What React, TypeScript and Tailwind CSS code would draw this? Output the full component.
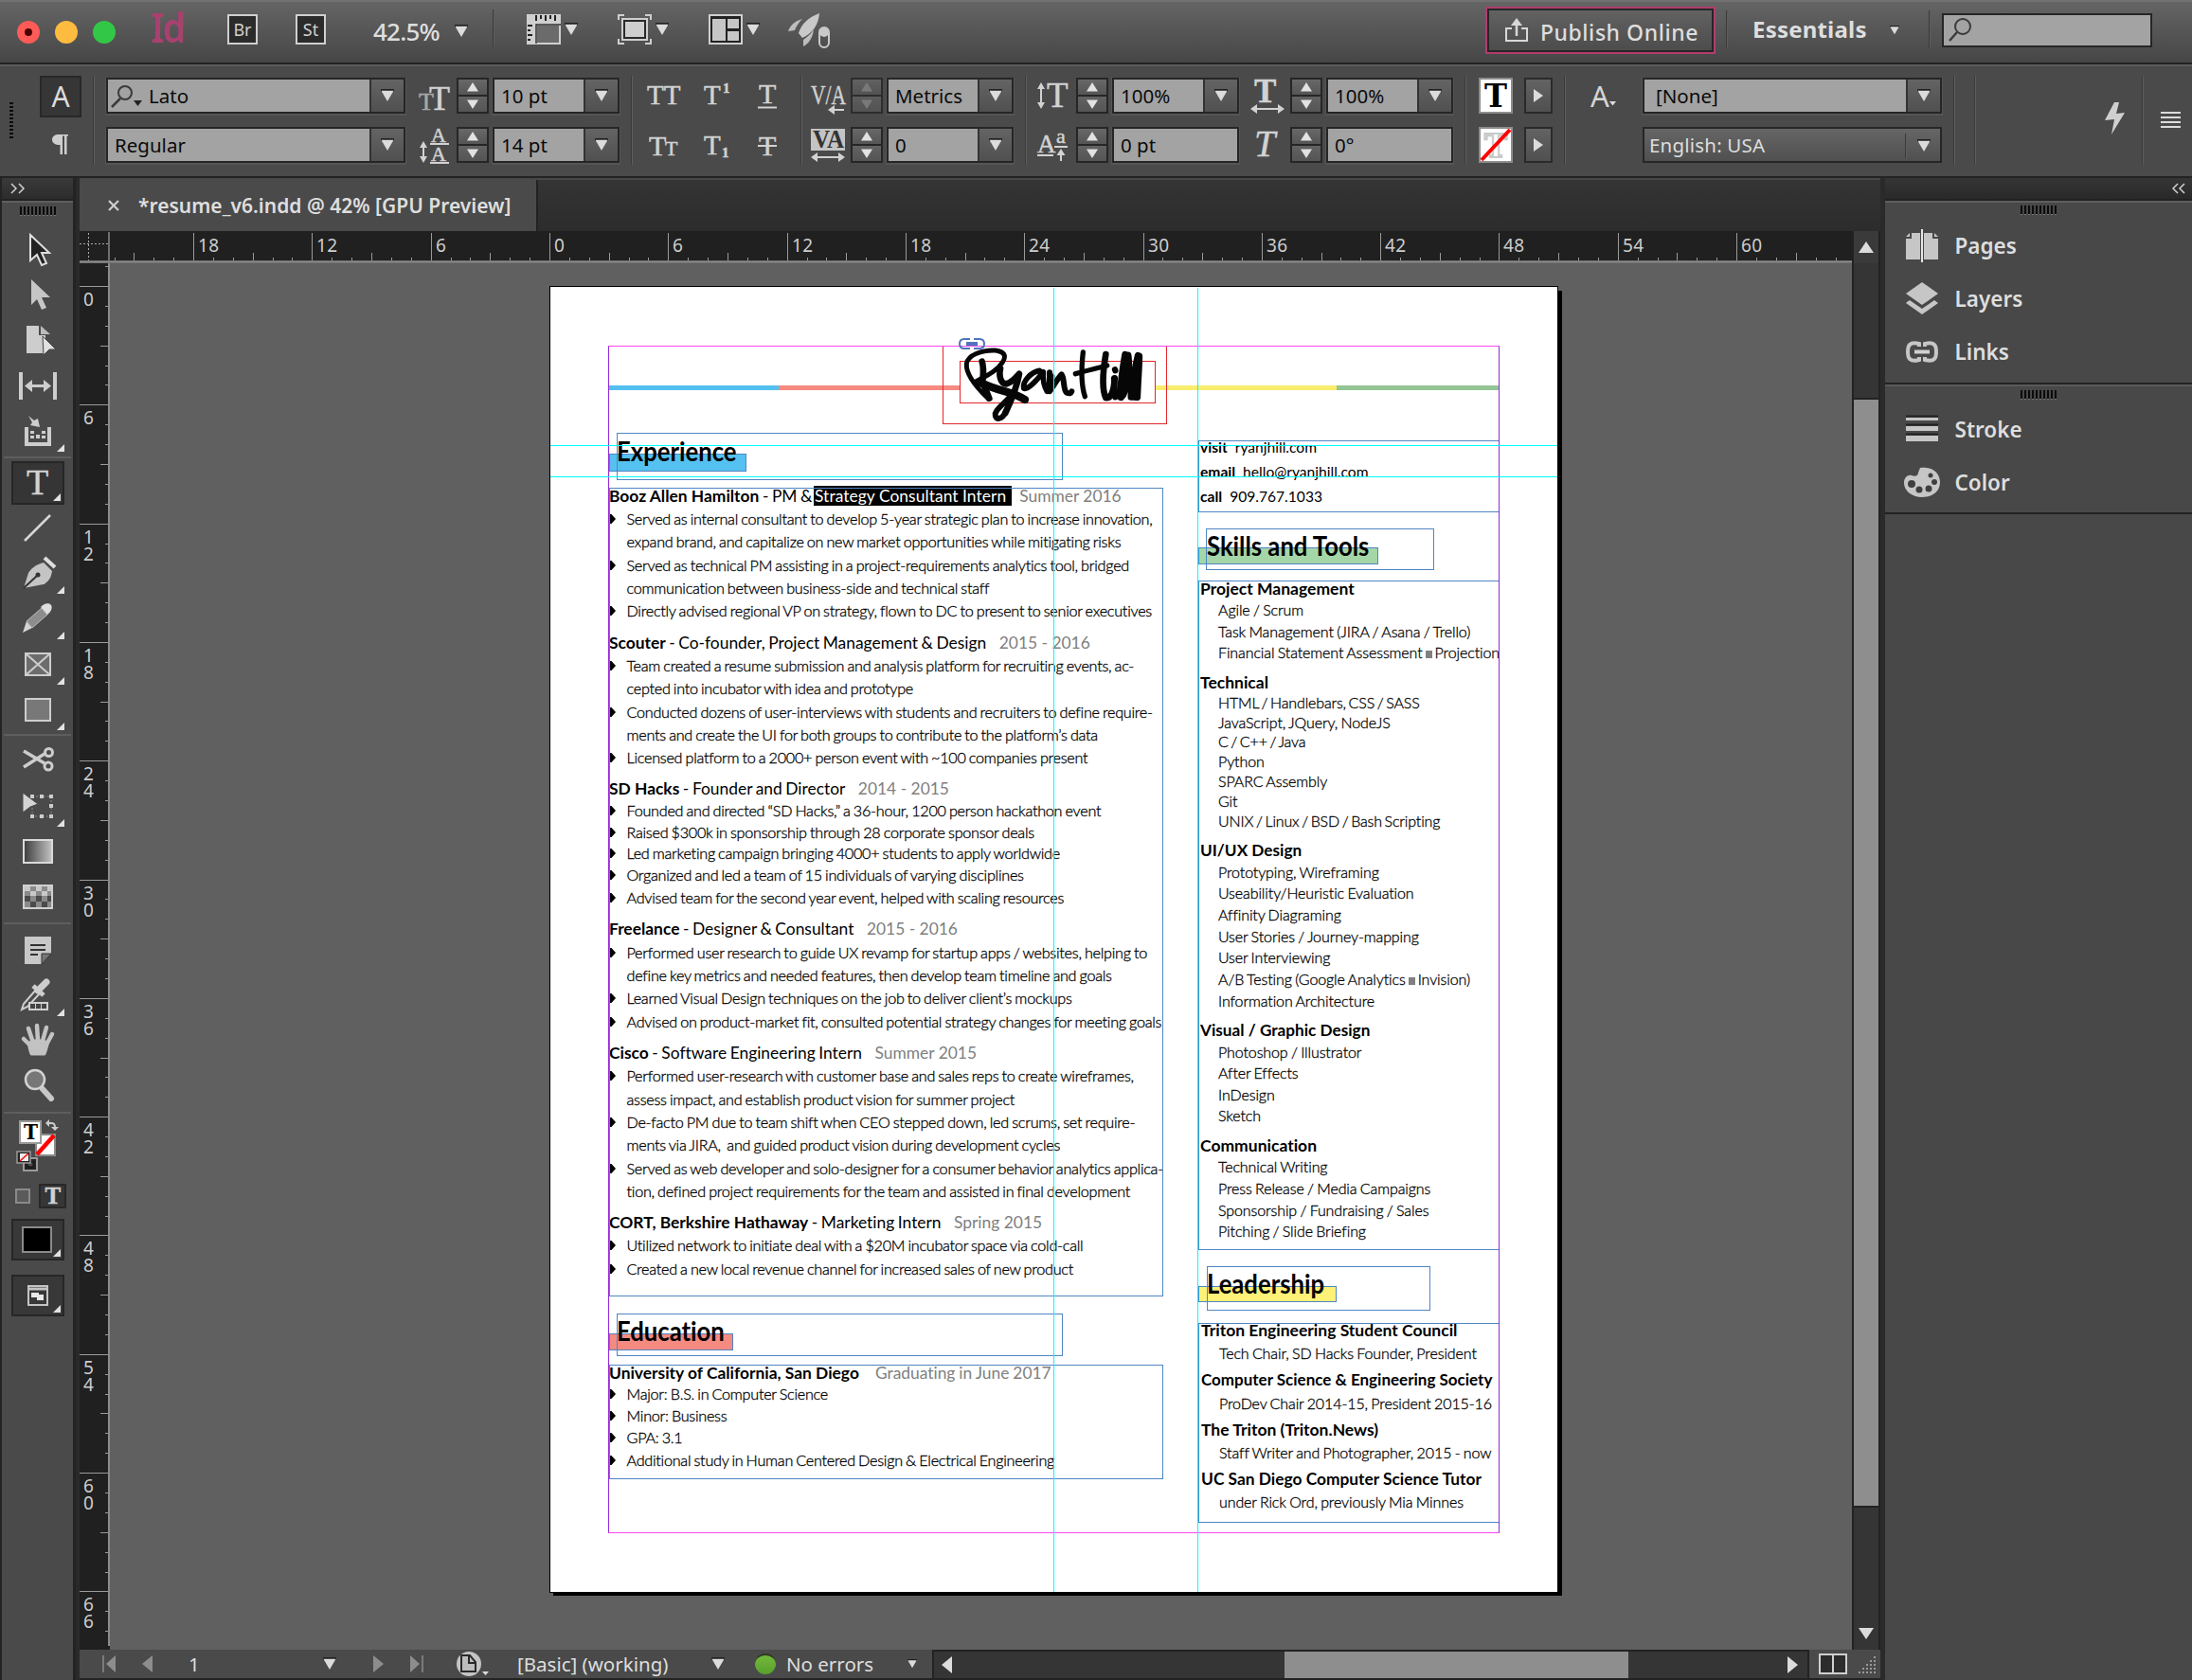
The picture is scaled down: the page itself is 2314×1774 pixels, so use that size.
import React from "react";

type Kids = { children?: React.ReactNode };

/* ---------- small shared pieces ---------- */

const Down = ({ s = 15 }: { s?: number }) => (
  <svg width={s} height={s} viewBox="0 0 15 15" className="shrink-0">
    <path d="M0 0H15V3H0Z" fill="#222" />
    <path d="M0.5 2H14.5L7.5 14Z" fill="#dcdcdc" />
  </svg>
);

const VSep = ({ className = "" }: { className?: string }) => (
  <div className={"w-[2px] shrink-0 border-l border-[#3a3a3a] bg-[#5e5e5e] " + className} />
);

const Grip = () => (
  <div className="flex h-[10px] gap-[2px]">
    {Array.from({ length: 10 }, (_, i) => (
      <div key={i} className="w-[2px] border-b border-[#777] bg-[#0c0c0c]" />
    ))}
  </div>
);

function Stepper({ dim = false }: { dim?: boolean }) {
  const c = dim ? "#858585" : "#e2e2e2";
  return (
    <div className={"flex h-[38px] w-[34px] shrink-0 flex-col gap-[2px] border-2 border-[#262626] bg-[#262626] " + (dim ? "opacity-80" : "")}>
      <div className="flex flex-1 items-center justify-center bg-gradient-to-b from-[#686868] to-[#555]">
        <svg width="12" height="10" viewBox="0 0 12 10"><path d="M6 0L12 9.500H0Z" fill={c} /></svg>
      </div>
      <div className="flex flex-1 items-center justify-center bg-gradient-to-b from-[#626262] to-[#555]">
        <svg width="12" height="10" viewBox="0 0 12 10"><path d="M6 10L12 .5H0Z" fill={c} /></svg>
      </div>
    </div>
  );
}

function Field({ text, drop = true, className = "", children }: { text: string; drop?: boolean; className?: string } & Kids) {
  return (
    <div className={"flex h-[38px] shrink-0 border-2 border-[#262626] shadow-[0_1px_0_1px_#555] " + className}>
      <div className="flex flex-1 items-center bg-[#a3a3a3] pt-px pl-[7px] text-[20.5px] leading-none text-[#0a0a0a]">
        {children}
        <span className="whitespace-nowrap">{text}</span>
      </div>
      {drop && (
        <div className="flex w-[36px] items-center justify-center border-l-2 border-[#333] bg-gradient-to-b from-[#646464] to-[#505050]">
          <Down s={14} />
        </div>
      )}
    </div>
  );
}

const Serif = ({ x, y, s, t, b = false, i = false, fill = "#d2d2d2" }: { x: number; y: number; s: number; t: string; b?: boolean; i?: boolean; fill?: string }) => (
  <text x={x} y={y} fontSize={s} fontFamily="'Liberation Serif', serif" fontWeight={b ? 700 : 400} fontStyle={i ? "italic" : "normal"} fill={fill} stroke={fill} strokeWidth=".5">
    {t}
  </text>
);

const Ico = ({ w = 36, h = 38, className = "", children }: { w?: number; h?: number; className?: string } & Kids) => (
  <svg width={w} height={h} viewBox={`0 0 ${w} ${h}`} className={"shrink-0 overflow-visible " + className} fill="none">
    {children}
  </svg>
);

/* ---------- application bar ---------- */

function AppBar() {
  return (
    <header className="flex h-[70px] shrink-0 items-start border-b-2 border-b-[#5c5c5c] bg-[#232323]">
      <div className="flex h-[66px] w-full items-start border-t-2 border-[#727272] bg-gradient-to-b from-[#656565] to-[#464646]">
        <div className="mt-[20px] ml-[18px] flex gap-4">
          <div className="flex size-6 items-center justify-center rounded-full bg-[#fc5b57]">
            <div className="size-2 rounded-full bg-[#4d0000]" />
          </div>
          <div className="size-6 rounded-full bg-[#fdbc40]" />
          <div className="size-6 rounded-full bg-[#33c748]" />
        </div>
        <div className="mt-[3px] ml-[37px] w-[35px] text-[43px] leading-[48px] font-semibold tracking-[-2px] text-[#a8416f]">
          <div className="origin-left scale-x-90">Id</div>
        </div>
        <div className="mt-[13px] ml-[46px] flex h-[32px] w-[32px] items-center justify-center border-2 border-[#cfcfcf] bg-[#2b2b2b] text-[18px] leading-none text-[#d0d0d0]">Br</div>
        <div className="mt-[13px] ml-[40px] flex h-[32px] w-[32px] items-center justify-center border-2 border-[#cfcfcf] bg-[#2b2b2b] text-[18px] leading-none text-[#d0d0d0]">St</div>
        <div className="mt-[13px] ml-[50px] w-[72px] text-[26px] leading-[36px] font-medium tracking-[-0.8px] text-[#dedede]">42.5%</div>
        <div className="mt-[24px] ml-[14px]"><Down s={14} /></div>
        <VSep className="mt-[8px] ml-[26px] h-[40px]" />
        <div className="mt-[13px] ml-[34px] flex w-[54px] items-center gap-[4px]">
          <Ico w={36} h={32}>
            <path d="M0 0H36V32H0Z" fill="#cfcfcf" />
            <path d="M11 12H34V30H11Z" fill="#6b6b6b" />
            <path d="M10 1v6M15 1v4M20 1v6M25 1v4M30 1v6M1 12h5M1 17h3M1 22h5M1 27h3" stroke="#222" strokeWidth="2" />
            <path d="M10 31V11H36" stroke="#333" strokeWidth="1.500" />
          </Ico>
          <Down s={14} />
        </div>
        <div className="mt-[13px] ml-[42px] flex w-[54px] items-center gap-[4px]">
          <Ico w={36} h={32}>
            <path d="M1 6V1H7M29 1H35V6M35 26V31H29M7 31H1V26" stroke="#cfcfcf" strokeWidth="2" />
            <path d="M5 5H31V27H5Z" stroke="#cfcfcf" strokeWidth="2" fill="#2a2a2a" />
            <path d="M8 8H28V24H8Z" fill="#cfcfcf" />
          </Ico>
          <Down s={14} />
        </div>
        <div className="mt-[13px] ml-[42px] flex w-[54px] items-center gap-[4px]">
          <Ico w={36} h={32}>
            <path d="M1 1H35V31H1Z" fill="#222" stroke="#cfcfcf" strokeWidth="2" />
            <path d="M4 5H18V28H4ZM20 5H32V15H20ZM20 18H32V28H20Z" fill="#c6c6c6" />
          </Ico>
          <Down s={14} />
        </div>
        <Ico w={46} h={40} className="mt-[11px] ml-[30px]">
          <path d="M33 1C22 5 14 12 11 22L15 27C26 22 32 13 33 1Z" fill="#c9c9c9" />
          <path d="M15 7C7 9 2 14 0 20L7 19C9 14 11 11 15 7ZM27 18C24 23 20 26 16 29L16 36C23 32 26 26 27 18Z" fill="#bdbdbd" />
          <rect x="33" y="16" width="10" height="21" rx="5" stroke="#c9c9c9" strokeWidth="2" />
          <circle cx="38" cy="21" r="5" fill="#c9c9c9" />
        </Ico>
        <div className="mt-[5px] ml-[690px] flex h-[50px] w-[243px] shrink-0 border-2 border-[#b03d6d]">
          <div className="flex flex-1 items-center border-2 border-[#262626] bg-gradient-to-b from-[#626262] to-[#4c4c4c]">
            <Ico w={26} h={26} className="ml-[16px]">
              <path d="M8 11H2V24H24V11H18" stroke="#d8d8d8" strokeWidth="2" />
              <path d="M13 19V5" stroke="#d8d8d8" strokeWidth="2.500" />
              <path d="M13 0L19 8H7Z" fill="#d8d8d8" />
            </Ico>
            <span className="mt-[4px] ml-[12px] text-[23px] leading-none font-medium tracking-[0.55px] whitespace-nowrap text-[#dedede]">Publish Online</span>
          </div>
        </div>
        <VSep className="mt-[9px] ml-[11px] h-[40px]" />
        <div className="mt-[13px] ml-[26px] w-[124px] text-[24px] leading-[32px] font-bold tracking-[0.2px] whitespace-nowrap text-[#dedede]">Essentials</div>
        <div className="mt-[25px] ml-[21px]"><Down s={10} /></div>
        <VSep className="mt-[9px] ml-[31px] h-[40px]" />
        <div className="mt-[12px] ml-[12px] flex h-[36px] w-[222px] items-center border-2 border-[#262626] bg-[#a3a3a3] pl-[4px]">
          <Ico w={28} h={28}>
            <circle cx="16" cy="10" r="8" stroke="#3a3a3a" strokeWidth="2" />
            <path d="M10 16L2 25" stroke="#3a3a3a" strokeWidth="2.500" />
          </Ico>
        </div>
      </div>
    </header>
  );
}

/* ---------- control bar ---------- */

const Rows = ({ className = "", children }: { className?: string } & Kids) => (
  <div className={"flex shrink-0 flex-col gap-[14px] " + className}>{children}</div>
);

const T1 = "#d2d2d2";

function ControlBar() {
  return (
    <section className="flex h-[118px] shrink-0 items-start border-b-2 border-[#232323] bg-[#4a4a4a] pt-[12px]">
      <div className="mt-[26px] ml-[10px] flex h-[40px] flex-col gap-[2px]">
        {Array.from({ length: 10 }, (_, i) => <div key={i} className="h-[2px] w-[4px] bg-[#0c0c0c]" />)}
      </div>
      <div className="-mt-[2px] ml-[28px] flex w-[44px] flex-col items-center">
        <div className="flex h-[44px] w-[44px] items-center justify-center border-2 border-[#282828] bg-[#363636]">
          <span className="text-[30px] leading-none text-[#dcdcdc]">A</span>
        </div>
        <Ico w={20} h={24} className="mt-[17px]">
          <path d="M8 1H18V2.500H16.500V22H14V2.500H12V22H9.500V12C4 12 1 10 1 6.500S4 1 8 1Z" fill="#cfcfcf" />
        </Ico>
      </div>
      <VSep className="-mt-[2px] ml-[12px] h-[94px]" />
      <Rows className="ml-[12px]">
        <Field text="Lato" className="w-[316px]">
          <Ico w={36} h={30} className="-ml-[6px]">
            <circle cx="17" cy="11" r="7" stroke="#3a3a3a" strokeWidth="2" />
            <path d="M12 17L3 26" stroke="#3a3a3a" strokeWidth="2.500" />
            <path d="M26 19H35L30.500 25Z" fill="#222" />
          </Ico>
          <span className="w-[6px]" />
        </Field>
        <Field text="Regular" className="w-[316px]" />
      </Rows>
      <Rows className="ml-[14px]">
        <Ico w={34}>
          <Serif x={0} y={34} s={26} t="T" fill="#a8a8a8" />
          <Serif x={11} y={34} s={36} t="T" />
        </Ico>
        <Ico w={34}>
          <Serif x={13} y={16} s={22} t="A" />
          <Serif x={13} y={36} s={22} t="A" />
          <path d="M12 18H32M12 38H32M5 18V36" stroke={T1} strokeWidth="2" />
          <path d="M5 15L1 22H9ZM5 38L1 31H9Z" fill={T1} />
        </Ico>
      </Rows>
      <Rows className="ml-[6px]"><Stepper /><Stepper /></Rows>
      <Rows className="ml-[4px]">
        <Field text="10 pt" className="w-[134px]" />
        <Field text="14 pt" className="w-[134px]" />
      </Rows>
      <VSep className="-mt-[2px] ml-[12px] h-[94px]" />
      <Rows className="ml-[15px]">
        <div className="flex">
          <Ico w={36}><Serif x={0} y={28} s={29} t="TT" /></Ico>
          <Ico w={32} className="ml-[24px]"><Serif x={0} y={28} s={29} t="T" /><Serif x={20} y={16} s={15} t="1" b /></Ico>
          <Ico w={22} className="ml-[25px]"><Serif x={1} y={27} s={30} t="T" /><path d="M0 31.500H20" stroke={T1} strokeWidth="2" /></Ico>
        </div>
        <div className="flex">
          <Ico w={36}><Serif x={2} y={30} s={30} t="T" /><Serif x={19} y={30} s={22} t="T" /></Ico>
          <Ico w={32} className="ml-[24px]"><Serif x={0} y={29} s={29} t="T" /><Serif x={19} y={32} s={15} t="1" b /></Ico>
          <Ico w={22} className="ml-[25px]"><Serif x={1} y={30} s={30} t="T" /><path d="M0 20H20" stroke={T1} strokeWidth="2" /></Ico>
        </div>
      </Rows>
      <VSep className="-mt-[2px] ml-[23px] h-[94px]" />
      <Rows className="ml-[9px]">
        <Ico w={38}>
          <text x="0" y="28" fontSize="30" fontFamily="'Liberation Serif', serif" fill={T1} stroke={T1} strokeWidth=".4" textLength="37" lengthAdjust="spacingAndGlyphs">V/A</text>
          <path d="M18 34L25 29V39ZM23 33H35V35H23Z" fill={T1} />
        </Ico>
        <Ico w={38}>
          <path d="M0 2H36V25H0Z" fill="#c4c4c4" />
          <text x="2" y="22" fontSize="27" fontFamily="'Liberation Serif', serif" fontWeight="700" fill="#333" textLength="33" lengthAdjust="spacingAndGlyphs">VA</text>
          <path d="M5 32H31" stroke={T1} strokeWidth="2" />
          <path d="M0 32L7 27V37ZM36 32L29 27V37Z" fill={T1} />
        </Ico>
      </Rows>
      <Rows className="ml-[4px]"><Stepper dim /><Stepper /></Rows>
      <Rows className="ml-[4px]">
        <Field text="Metrics" className="w-[134px]" />
        <Field text="0" className="w-[134px]" />
      </Rows>
      <VSep className="-mt-[2px] ml-[12px] h-[94px]" />
      <Rows className="ml-[11px]">
        <Ico w={36}>
          <Serif x={10} y={31} s={37} t="T" />
          <path d="M4 9V29" stroke={T1} strokeWidth="2" />
          <path d="M4 5L0 12H8ZM4 33L0 26H8Z" fill={T1} />
        </Ico>
        <Ico w={36}>
          <Serif x={0} y={27} s={27} t="A" />
          <Serif x={20} y={17} s={22} t="a" />
          <path d="M0 30H17M18 21H32M25 26V36" stroke={T1} strokeWidth="2" />
          <path d="M25 23L20.500 30H29.500Z" fill={T1} />
        </Ico>
      </Rows>
      <Rows className="ml-[5px]"><Stepper /><Stepper /></Rows>
      <Rows className="ml-[4px]">
        <Field text="100%" className="w-[134px]" />
        <Field text="0 pt" drop={false} className="w-[134px]" />
      </Rows>
      <Rows className="ml-[12px]">
        <Ico w={38}>
          <Serif x={4} y={26} s={35} t="T" b />
          <path d="M5 33H31" stroke={T1} strokeWidth="2" />
          <path d="M0 33L7 28V38ZM36 33L29 28V38Z" fill={T1} />
        </Ico>
        <Ico w={38}><Serif x={4} y={31} s={40} t="T" i /></Ico>
      </Rows>
      <Rows className="ml-[4px]"><Stepper /><Stepper /></Rows>
      <Rows className="ml-[4px]">
        <Field text="100%" className="w-[134px]" />
        <Field text="0°" drop={false} className="w-[134px]" />
      </Rows>
      <VSep className="-mt-[2px] ml-[12px] h-[94px]" />
      <Rows className="ml-[13px]">
        <Ico w={36}>
          <path d="M1 1H35V37H1Z" fill="#fff" stroke="#8c8c8c" strokeWidth="2" />
          <text x="6" y="31" fontSize="34" fontFamily="'DejaVu Serif', serif" fontWeight="700" fill="#000" textLength="24" lengthAdjust="spacingAndGlyphs">T</text>
        </Ico>
        <Ico w={36}>
          <path d="M1 1H35V37H1Z" fill="#fff" stroke="#8c8c8c" strokeWidth="2" />
          <text x="6" y="32" fontSize="34" fontFamily="'DejaVu Serif', serif" fontWeight="700" fill="#fff" stroke="#c9c9c9" strokeWidth="2" textLength="24" lengthAdjust="spacingAndGlyphs">T</text>
          <path d="M3 35L33 3" stroke="#f00" strokeWidth="4" />
        </Ico>
      </Rows>
      <Rows className="ml-[12px]">
        {[0, 1].map((k) => (
          <div key={k} className="flex h-[38px] w-[30px] items-center justify-center border-2 border-[#2a2a2a] bg-gradient-to-b from-[#636363] to-[#505050]">
            <svg width="10" height="14" viewBox="0 0 10 14"><path d="M0 0L10 7L0 14Z" fill="#dcdcdc" /></svg>
          </div>
        ))}
      </Rows>
      <VSep className="-mt-[2px] ml-[12px] h-[94px]" />
      <div className="mt-[4px] ml-[26px] flex w-[32px] items-end text-[31px] leading-[30px] text-[#d6d6d6]">
        A
        <svg width="8" height="5" viewBox="0 0 8 5" className="mb-[4px]"><path d="M0 0H7L3.500 4.500Z" fill="#dcdcdc" /></svg>
      </div>
      <Rows className="ml-[23px]">
        <Field text="[None]" className="w-[316px]"><span className="w-[5px]" /></Field>
        <div className="flex h-[38px] w-[316px] items-center border-2 border-[#262626] bg-gradient-to-b from-[#666] to-[#505050] pt-px pl-[5px] text-[20.5px] leading-none text-[#dedede]">
          <span className="flex-1 tracking-[0.2px]">English: USA</span>
          <VSep className="h-[26px]" />
          <div className="flex w-[35px] justify-center"><Down s={14} /></div>
        </div>
      </Rows>
      <VSep className="-mt-[2px] ml-[12px] h-[94px]" />
      <VSep className="-mt-[2px] ml-[20px] h-[94px]" />
      <Ico w={22} h={36} className="mt-[26px] ml-[136px]">
        <path d="M10 0H15L12 12L21 11L7 34L10 18L0 19Z" fill="#cfcfcf" />
      </Ico>
      <VSep className="-mt-[2px] ml-[17px] h-[94px]" />
      <div className="mt-[36px] ml-[18px] flex w-[21px] flex-col gap-[3px]">
        {[0, 1, 2, 3].map((k) => <div key={k} className="h-[2px] bg-[#dcdcdc]" />)}
      </div>
    </section>
  );
}

/* ---------- tool palette ---------- */

const G = "#cdcdcd";
const tools1: [React.ReactNode, boolean][] = [
  [<path key="a" d="M12 9L32 28H24L29 39L24 41L19 30L12 36Z" stroke="#dedede" strokeWidth="2" fill="#222" />, false],
  [<path key="b" d="M13 8L33 27H24L29 38L24 40L19 29L13 35Z" fill="#c6c6c6" />, false],
  [<g key="c"><path d="M8 9H21V19H28V38H8Z" fill="#cdcdcd" /><path d="M23 9L33 18H23Z" fill="#bbb" /><path d="M25 20L39 34H32L26 40Z" fill="#e0e0e0" stroke="#444" strokeWidth="1" /></g>, false],
  [<g key="d" fill={G}><path d="M0 10H4V39H0ZM36 10H40V39H36ZM12 23H28V26H12Z" /><path d="M6 24.500L14 18V31ZM34 24.500L26 18V31Z" /></g>, false],
  [<g key="e"><path d="M6 20H10V36H30V20H34V40H6Z" fill={G} /><path d="M12 24h4v3h-4zM12 29h4v3h-4zM18 28h4v4h-4zM24 24h4v3h-4zM24 29h4v3h-4z" fill={G} /><path d="M10 8L16 13L20 11L22 20L12 18L14 15Z" fill={G} /></g>, true],
];
const tools2: [React.ReactNode, boolean][] = [
  [<path key="a" d="M6 38L33 11" stroke="#d8d8d8" strokeWidth="2.500" />, false],
  [<g key="b"><path d="M5 40L10 24C12 20 18 15 26 13L35 22C34 30 30 34 26 36Z" fill="#c4c4c4" /><path d="M5 40L19 27" stroke="#333" strokeWidth="2" /><circle cx="20" cy="26" r="2.500" fill="#333" /><path d="M27 8L38 18" stroke="#dedede" strokeWidth="4" /></g>, true],
  [<g key="c"><path d="M4 39L8 27L14 34Z" fill="#d4d4d4" /><path d="M8 27L24 13L30 20L14 34Z" fill="#8d8d8d" stroke="#bbb" strokeWidth="1" /><path d="M23 12C26 8 32 7 34 10S33 18 30 20Z" fill="#dedede" /></g>, true],
  [<g key="d" stroke={G} strokeWidth="2"><path d="M7 13H33V36H7Z" fill="#6c6c6c" /><path d="M7 13L33 36M33 13L7 36" /></g>, true],
  [<path key="e" d="M7 13H33V36H7Z" fill="#787878" stroke={G} strokeWidth="2" />, true],
];
const tools3: [React.ReactNode, boolean][] = [
  [<g key="a" stroke={G}><path d="M5 14L27 27M5 31L27 17" strokeWidth="3.500" /><circle cx="31.500" cy="15.500" r="4" strokeWidth="3" /><circle cx="31" cy="30" r="4" strokeWidth="3" /></g>, false],
  [<g key="b"><path d="M14 14H34V35H14Z" stroke="#888" strokeWidth="1" strokeDasharray="2 2" /><path d="M12 12h4v4h-4zM22 12h4v4h-4zM32 12h4v4h-4zM32 22h4v4h-4zM32 33h4v4h-4zM22 33h4v4h-4zM12 33h4v4h-4z" fill={G} /><path d="M4 10L20 22L12 25L4 31Z" fill="#d4d4d4" stroke="#4a4a4a" strokeWidth="1" /></g>, true],
  [<g key="c"><defs><linearGradient id="g1"><stop stopColor="#3c3c3c" /><stop offset="1" stopColor="#c4c4c4" /></linearGradient></defs><path d="M5 12H35V36H5Z" fill="url(#g1)" stroke="#dadada" strokeWidth="2" /></g>, false],
  [<g key="d"><path d="M5 12H35V36H5Z" fill="#8a8a8a" stroke="#d0d0d0" strokeWidth="2" /><path d="M6 13h6v5h-6zM18 13h6v5h-6zM30 13h4v5h-4zM12 18h6v5h-6zM24 18h6v5h-6z" fill="#c8c8c8" /><path d="M6 23h6v6h-6zM18 23h6v6h-6zM30 23h4v6h-4zM12 29h6v6h-6zM24 29h6v6h-6z" fill="#4b4b4b" /></g>, false],
];
const tools4: [React.ReactNode, boolean][] = [
  [<g key="a"><path d="M6 10H34V28L24 39H6Z" fill="#c8c8c8" /><path d="M34 28H24V39Z" fill="#777" stroke="#333" /><path d="M12 19H28M12 24H28M12 29H20" stroke="#333" strokeWidth="2" /></g>, false],
  [<g key="b"><path d="M3 39L5 33L18 18L22 22L9 36Z" stroke={G} strokeWidth="2" /><path d="M15 14L26 24" stroke={G} strokeWidth="5" /><path d="M20 19L29 10" stroke={G} strokeWidth="7" strokeLinecap="round" /><path d="M10 31H31V40H10Z" fill="#d0d0d0" /><path d="M12 33h5v5h-5zM18 33h5v5h-5zM24 33h5v5h-5z" fill="#444" /></g>, true],
  [<g key="c" stroke="#c2c2c2" strokeLinecap="round" strokeLinejoin="round"><path d="M15 26L10 11M20 24L19 8M25 24L29 10M29 28L35 17M13 30L5 22" strokeWidth="4.500" /><path d="M13 38C12 34 10 30 11 26L15 24H26L30 27C30 31 28 34 27 38Z" fill="#c2c2c2" strokeWidth="3" /></g>, false],
  [<g key="d"><path d="M25 27L34 37" stroke="#c8c8c8" strokeWidth="6" strokeLinecap="round" /><circle cx="17" cy="17" r="10" fill="#777" stroke="#d2d2d2" strokeWidth="2.500" /></g>, false],
];

const Corner = () => (
  <svg width="8" height="8" viewBox="0 0 8 8" className="absolute right-[2px] bottom-[2px]">
    <path d="M8 0V8H0Z" fill="#e2e2e2" />
  </svg>
);

const Cells = ({ list }: { list: [React.ReactNode, boolean][] }) => (
  <>
    {list.map(([art, more], i) => (
      <div key={i} className="relative flex h-[48px] w-[68px] items-center justify-center pl-[8px]">
        <svg width="40" height="48" viewBox="0 0 40 48" fill="none">{art}</svg>
        {more && <Corner />}
      </div>
    ))}
  </>
);
const HSep = ({ className = "my-[3px]" }: { className?: string }) => <div className={"mx-[2px] h-[2px] bg-[#5e5e5e] " + className} />;

function Toolbar() {
  return (
    <aside className="flex w-[80px] shrink-0 flex-col border-r-[3px] border-l-2 border-[#232323] bg-[#4a4a4a]">
      <div className="flex h-[24px] items-center border-b-2 border-[#222] bg-gradient-to-b from-[#3a3a3a] to-[#2c2c2c] pl-[9px]">
        <Ico w={16} h={12}><path d="M1 1L6 6L1 11M9 1L14 6L9 11" stroke="#cfcfcf" strokeWidth="1.500" /></Ico>
      </div>
      <div className="flex h-[27px] justify-center border-t-2 border-[#5e5e5e] pt-[4px]"><Grip /></div>
      <Cells list={tools1} />
      <HSep />
      <div className="relative ml-[10px] flex h-[46px] w-[56px] items-center justify-center border-2 border-[#262626] bg-[#353535]">
        <svg width="30" height="32" viewBox="0 0 30 32" className="overflow-visible"><Serif x={3} y={28} s={38} t="T" /></svg>
        <Corner />
      </div>
      <Cells list={tools2} />
      <HSep className="my-[2px]" />
      <Cells list={tools3} />
      <HSep />
      <Cells list={tools4} />
      <HSep />
      <svg width="56" height="64" viewBox="0 0 56 64" className="mt-[3px] ml-[10px]" fill="none">
        <path d="M26 16H46V38H26Z" fill="#fff" stroke="#8a8a8a" strokeWidth="2" />
        <path d="M27 37L45 17" stroke="#f00" strokeWidth="4.500" />
        <path d="M9 2H31V25H9Z" fill="#fff" stroke="#9a9a9a" strokeWidth="2" />
        <text x="13" y="21" fontSize="22" fontFamily="'DejaVu Serif', serif" fontWeight="700" fill="#000" textLength="15" lengthAdjust="spacingAndGlyphs">T</text>
        <path d="M38 4H43Q46 4 46 9" stroke={G} strokeWidth="2" />
        <path d="M36 4L40 0V8ZM46 12L42 8H50Z" fill={G} />
        <path d="M13 41H27V54H13Z" fill="#222" stroke="#9a9a9a" strokeWidth="2" />
        <path d="M17 45H23V50H17Z" fill="#4a4a4a" stroke="#111" />
        <path d="M6 34H20V46H6Z" fill="#222" stroke="#9a9a9a" strokeWidth="1.500" />
        <path d="M9 36H18V44H9Z" fill="#eee" />
        <path d="M9 44L18 36" stroke="#f00" strokeWidth="1.500" />
      </svg>
      <div className="mt-[4px] flex h-[26px] items-center pl-[14px]">
        <div className="size-[16px] border-2 border-[#8a8a8a] bg-[#5a5a5a]" />
        <div className="ml-[9px] flex h-[26px] w-[29px] items-center justify-center border-2 border-[#282828] bg-[#363636]">
          <svg width="20" height="20" viewBox="0 0 20 20" className="overflow-visible"><Serif x={1.5} y={18} s={25} t="T" b /></svg>
        </div>
      </div>
      <div className="relative mt-[11px] ml-[10px] flex h-[44px] w-[56px] items-center justify-center border-2 border-[#262626] bg-[#383838]">
        <div className="mr-[2px] h-[28px] w-[32px] border-2 border-[#8a8a8a] bg-black" />
        <Corner />
      </div>
      <div className="relative mt-[15px] ml-[10px] flex h-[44px] w-[56px] items-center justify-center border-2 border-[#262626] bg-[#383838]">
        <Ico w={22} h={22}>
          <path d="M1 1H21V21H1Z" stroke="#c4c4c4" strokeWidth="2" />
          <path d="M1 4H21" stroke="#c4c4c4" strokeWidth="3" />
          <path d="M4 8H12V10H17V16H10V13H4Z" fill="#e8e8e8" />
        </Ico>
        <Corner />
      </div>
    </aside>
  );
}

/* ---------- rulers ---------- */

const UNIT = 20.885;

function TopRuler() {
  const ticks = [];
  for (let n = -22; n <= 65; n++) {
    const x = Math.round(580 - 84 + n * UNIT);
    if (x < 33) continue;
    const m = n % 6 === 0 ? 2 : n % 3 === 0 ? 23 : 28;
    ticks.push(<path key={n} d={`M${x + 0.5} ${m}V31`} stroke="#9a9a9a" />);
    if (n % 6 === 0) ticks.push(<text key={"t" + n} x={x + 5} y="22" fontSize="19" letterSpacing="0.5" fill="#cdcdcd">{Math.abs(n)}</text>);
  }
  return (
    <svg width="1871" height="34" className="block shrink-0 bg-[#202020]">
      {ticks}
      <path d="M0 13.500H31M9.500 2V31" stroke="#aaa" strokeDasharray="2 2" />
      <path d="M31 1V31" stroke="#8a8a8a" strokeWidth="1.500" />
      <path d="M0 32.500H1871" stroke="#8c8c8c" strokeWidth="2.500" />
    </svg>
  );
}

function SideRuler() {
  const marks = [];
  for (let n = -1; n <= 68; n++) {
    const y = Math.round(302 - 278 + n * UNIT);
    const m = n % 6 === 0 ? 0 : n % 3 === 0 ? 22 : 27;
    marks.push(<path key={n} d={`M${m} ${y + 0.5}H31`} stroke="#9a9a9a" />);
    if (n >= 0 && n % 6 === 0)
      String(n).split("").forEach((d, i) =>
        marks.push(<text key={n + "d" + i} x="4" y={y + 20.5 + i * 18} fontSize="19" fill="#cdcdcd">{d}</text>)
      );
  }
  return (
    <svg width="32" height="1464" className="block shrink-0 bg-[#202020]">
      {marks}
      <path d="M31 0V1460" stroke="#8c8c8c" strokeWidth="2" />
    </svg>
  );
}

/* ---------- document ---------- */

type Line = { y: number; k?: "h" | "b" | "c" | "i"; node: React.ReactNode };

function Story({ lines, className }: { lines: Line[]; className: string }) {
  return (
    <div className={"absolute flex flex-col whitespace-nowrap " + className}>
      {lines.map((l, i) => {
        const next = lines[i + 1];
        return (
          <div key={i} className="flex shrink-0" style={{ height: next ? next.y - l.y : 24 }}>
            {l.k === "h" ? (
              <div className="text-[17.4px] leading-[24px] [font-variant-ligatures:none]">{l.node}</div>
            ) : l.k === "i" ? (
              <div className="pl-[19px] text-[16px] leading-[24px] font-light tracking-[-0.1px] [word-spacing:-0.9px] [-webkit-text-stroke:0.3px_#000]">{l.node}</div>
            ) : (
              <div className="flex text-[16.2px] leading-[24px] font-light tracking-[-0.26px] [word-spacing:-0.9px] [-webkit-text-stroke:0.3px_#000]">
                <span className="w-[18.5px]">
                  {l.k === "b" && (
                    <svg width="7" height="10" viewBox="0 0 7 10" className="mt-[7px] ml-[1px]"><path d="M0 0H1.500L6 5L1.500 10H0Z" fill="#000" /></svg>
                  )}
                </span>
                {l.node}
              </div>
            )}
          </div>
        );
      })}
    </div>
  );
}

const job = (y: number, name: string, role: string, date: string): Line => ({
  y, k: "h",
  node: <><b>{name}</b><span className="[word-spacing:-0.9px]">{" - " + role}</span><span className="ml-[13.500px] text-[#808080]">{date}</span></>,
});
const b = (y: number, t: string): Line => ({ y, k: "b", node: t });
const c = (y: number, t: string): Line => ({ y, k: "c", node: t });
const it = (y: number, t: React.ReactNode): Line => ({ y, k: "i", node: t });
const tight = (y: number, t: string): Line => ({ y, k: "i", node: <span className="tracking-[-0.15px] [word-spacing:-1.5px]">{t}</span> });
const hd = (y: number, t: string, size = "text-[17.5px]"): Line => ({ y, k: "h", node: <b className={size}>{t}</b> });

const experience: Line[] = [
  { y: 530, k: "h", node: <><b>Booz Allen Hamilton</b><span className="[word-spacing:-0.9px]"> - PM &amp; </span><span className="-ml-[2px] bg-black pr-[6px] pl-px tracking-[0.06px] text-white">Strategy Consultant Intern</span><span className="ml-[8px] text-[#808080]">Summer 2016</span></> },
  b(554.3, "Served as internal consultant to develop 5-year strategic plan to increase innovation,"),
  c(578.4, "expand brand, and capitalize on new market opportunities while mitigating risks"),
  b(603.3, "Served as technical PM assisting in a project-requirements analytics tool, bridged"),
  c(627.4, "communication between business-side and technical staff"),
  b(651.4, "Directly advised regional VP on strategy, flown to DC to present to senior executives"),
  job(685, "Scouter", "Co-founder, Project Management & Design", "2015 - 2016"),
  b(709.3, "Team created a resume submission and analysis platform for recruiting events, ac-"),
  c(733.4, "cepted into incubator with idea and prototype"),
  b(758.3, "Conducted dozens of user-interviews with students and recruiters to define require-"),
  c(782.4, "ments and create the UI for both groups to contribute to the platform’s data"),
  b(806.4, "Licensed platform to a 2000+ person event with ~100 companies present"),
  job(839, "SD Hacks", "Founder and Director", "2014 - 2015"),
  b(862.3, "Founded and directed “SD Hacks,” a 36-hour, 1200 person hackathon event"),
  b(885.3, "Raised $300k in sponsorship through 28 corporate sponsor deals"),
  b(907.4, "Led marketing campaign bringing 4000+ students to apply worldwide"),
  b(930.4, "Organized and led a team of 15 individuals of varying disciplines"),
  b(954.4, "Advised team for the second year event, helped with scaling resources"),
  job(987, "Freelance", "Designer & Consultant", "2015 - 2016"),
  b(1012.4, "Performed user research to guide UX revamp for startup apps / websites, helping to"),
  c(1036.4, "define key metrics and needed features, then develop team timeline and goals"),
  b(1060.4, "Learned Visual Design techniques on the job to deliver client’s mockups"),
  b(1085.3, "Advised on product-market fit, consulted potential strategy changes for meeting goals"),
  job(1118, "Cisco", "Software Engineering Intern", "Summer 2015"),
  b(1142.4, "Performed user-research with customer base and sales reps to create wireframes,"),
  c(1167.3, "assess impact, and establish product vision for summer project"),
  b(1191.3, "De-facto PM due to team shift when CEO stepped down, led scrums, set require-"),
  c(1215.4, "ments via JIRA,\u00a0 and guided product vision during development cycles"),
  b(1240.4, "Served as web developer and solo-designer for a consumer behavior analytics applica-"),
  c(1264.4, "tion, defined project requirements for the team and assisted in final development"),
  job(1297, "CORT, Berkshire Hathaway", "Marketing Intern", "Spring 2015"),
  b(1321, "Utilized network to initiate deal with a $20M incubator space via cold-call"),
  b(1346, "Created a new local revenue channel for increased sales of new product"),
];

const education: Line[] = [
  { y: 1455.7, k: "h", node: <><b>University of California, San Diego</b><span className="ml-[17px] [word-spacing:-0.5px] text-[#808080]">Graduating in June 2017</span></> },
  b(1477.7, "Major: B.S. in Computer Science"),
  b(1500.7, "Minor: Business"),
  b(1524, "GPA: 3.1"),
  b(1547.7, "Additional study in Human Centered Design & Electrical Engineering"),
];

const Missing = () => <span className="mx-[3px] inline-block h-[8px] w-[7px] bg-[#808080]" />;

const contact: Line[] = [
  { y: 477.5, k: "h", node: <div className="text-[15.6px]"><b>visit</b>&nbsp; ryanjhill.com</div> },
  { y: 504, k: "h", node: <div className="text-[15.6px]"><b>email</b>&nbsp; hello@ryanjhill.com</div> },
  { y: 530, k: "h", node: <div className="text-[15.6px]"><b>call</b>&nbsp; 909.767.1033</div> },
];

const skills: Line[] = [
  hd(627.5, "Project Management"),
  it(650.4, "Agile / Scrum"),
  it(673, "Task Management (JIRA / Asana / Trello)"),
  it(695, <>Financial Statement Assessment<Missing />Projection</>),
  hd(726.6, "Technical"),
  tight(748.2, "HTML / Handlebars, CSS / SASS"),
  it(769, "JavaScript, JQuery, NodeJS"),
  tight(789.3, "C / C++ / Java"),
  it(810, "Python"),
  it(831, "SPARC Assembly"),
  it(852, "Git"),
  tight(873, "UNIX / Linux / BSD / Bash Scripting"),
  hd(904, "UI/UX Design", "text-[17.2px]"),
  it(927, "Prototyping, Wireframing"),
  it(949.4, "Useability/Heuristic Evaluation"),
  it(972.4, "Affinity Diagraming"),
  it(995.4, "User Stories / Journey-mapping"),
  it(1017.4, "User Interviewing"),
  it(1040.4, <>A/B Testing (Google Analytics<Missing />Invision)</>),
  it(1063, "Information Architecture"),
  hd(1094, "Visual / Graphic Design", "text-[17.2px]"),
  it(1117.4, "Photoshop / Illustrator"),
  it(1139.4, "After Effects"),
  it(1162.4, "InDesign"),
  it(1184.4, "Sketch"),
  hd(1215.7, "Communication"),
  it(1238, "Technical Writing"),
  it(1261, "Press Release / Media Campaigns"),
  it(1284, "Sponsorship / Fundraising / Sales"),
  it(1306, "Pitching / Slide Briefing"),
];

const leadership: Line[] = [
  hd(1410.7, "Triton Engineering Student Council"),
  it(1435, "Tech Chair, SD Hacks Founder, President"),
  hd(1462.7, "Computer Science & Engineering Society", "text-[17px]"),
  it(1487.7, "ProDev Chair 2014-15, President 2015-16"),
  hd(1515.7, "The Triton (Triton.News)"),
  it(1540, "Staff Writer and Photographer, 2015 - now"),
  hd(1567.7, "UC San Diego Computer Science Tutor", "text-[17.35px]"),
  it(1592.3, "under Rick Ord, previously Mia Minnes"),
];

const Frame = ({ className }: { className: string }) => <div className={"absolute border border-[#4f86c4] " + className} />;

const Title = ({ className, t }: { className: string; t: string }) => (
  <div className={"absolute origin-left scale-x-[0.9] text-[28.5px] leading-[34px] font-bold whitespace-nowrap [font-variant-ligatures:none] " + className}>{t}</div>
);

function Signature() {
  return (
    <svg className="absolute top-[340px] left-[980px]" width="270" height="120" viewBox="0 0 810 360" fill="none" stroke="#060606" strokeLinecap="round" strokeLinejoin="round">
      <path strokeWidth="15" d="M190 243C150 205 118 165 121 132C125 104 172 88 212 90C240 94 248 106 236 126C216 158 180 172 148 190" />
      <path strokeWidth="20" d="M170 125C178 150 172 175 172 190L193 242" />
      <path strokeWidth="25" d="M165 192C190 205 215 212 250 222C270 228 290 236 306 246" />
      <path strokeWidth="20" d="M228 148C222 175 232 198 248 196C264 192 276 178 288 164C282 200 262 250 244 288" />
      <path strokeWidth="18" d="M246 282C234 312 210 312 212 290C220 268 244 258 268 226" />
      <path strokeWidth="17" d="M352 154C324 158 298 190 302 210C312 216 340 190 364 158C362 184 368 206 376 220C386 220 390 200 392 172" />
      <path strokeWidth="18" d="M384 160L384 220C398 200 410 178 422 166C432 178 426 214 438 224C446 228 452 226 454 220" />
      <path strokeWidth="16" d="M490 96C484 150 484 200 496 236M466 164C500 154 530 148 566 138" />
      <path strokeWidth="20" d="M562 102C554 150 548 210 562 240C578 244 588 220 590 178" />
      <path strokeWidth="19" d="M588 180L592 238M591 151L592 154" />
      <path strokeWidth="23" d="M624 104C616 150 608 210 610 238C630 220 638 150 632 106" />
      <path strokeWidth="21" d="M664 106C654 150 642 210 642 238C656 236 664 240 662 238C664 180 668 140 668 108" />
    </svg>
  );
}

function Canvas() {
  return (
    <div className="relative h-[1464px] w-[1839px] overflow-hidden bg-[#606060]">
      <div className="absolute -top-[278px] -left-[116px] h-[1774px] w-[2314px] font-[Lato,sans-serif] text-black">
        <div className="absolute top-[307px] left-[584px] h-[1378px] w-[1065px] bg-black" />
        <div className="absolute top-[302px] left-[580px] h-[1380px] w-[1065px] border border-black bg-white" />

        <div className="absolute top-[407px] left-[643px] flex h-[5px]">
          <div className="w-[179px] bg-[#53c0ef]" />
          <div className="w-[191px] bg-[#f58a81]" />
          <div className="ml-[207px] w-[191px] bg-[#f9ed6d]" />
          <div className="w-[171px] bg-[#93c595]" />
        </div>

        <div className="absolute top-[479px] left-[643px] h-[19px] w-[145px] border border-[#4f86c4] bg-[#55c1f0]" />
        <div className="absolute top-[1408px] left-[643px] h-[18px] w-[131px] border border-[#4f86c4] bg-[#f58a81]" />
        <div className="absolute top-[578px] left-[1265px] h-[18px] w-[190px] border border-[#4f86c4] bg-[#a5d6a7]" />
        <div className="absolute top-[1358px] left-[1265px] h-[17px] w-[146px] border border-[#4f86c4] bg-[#fdf177]" />

        <Title className="top-[459px] left-[651px]" t="Experience" />
        <Title className="top-[1388px] left-[651px]" t="Education" />
        <Title className="top-[559px] left-[1274px]" t="Skills and Tools" />
        <Title className="top-[1338px] left-[1274px]" t="Leadership" />

        <Story className="top-[512px] left-[643px]" lines={experience} />
        <Story className="top-[1437.700px] left-[643px]" lines={education} />
        <Story className="top-[459.500px] left-[1267px]" lines={contact} />
        <Story className="top-[609.500px] left-[1267px]" lines={skills} />
        <Story className="top-[1392.700px] left-[1268px]" lines={leadership} />

        <Frame className="top-[457px] left-[651px] h-[50px] w-[471px]" />
        <Frame className="top-[515px] left-[643px] h-[854px] w-[585px]" />
        <Frame className="top-[1387px] left-[651px] h-[45px] w-[471px]" />
        <Frame className="top-[1441px] left-[643px] h-[121px] w-[585px]" />
        <Frame className="top-[465px] left-[1265px] h-[76px] w-[318px]" />
        <Frame className="top-[558px] left-[1273px] h-[44px] w-[241px]" />
        <Frame className="top-[613px] left-[1265px] h-[707px] w-[318px]" />
        <Frame className="top-[1337px] left-[1274px] h-[47px] w-[236px]" />
        <Frame className="top-[1397px] left-[1265px] h-[211px] w-[318px]" />

        <div className="absolute top-[365px] left-[995px] h-[83px] w-[237px] border border-[#e3262b]" />
        <div className="absolute top-[381px] left-[1013px] h-[45px] w-[207px] border border-[#e3262b]" />
        <Signature />

        <div className="absolute top-[365px] left-[642px] h-[1254px] w-[941px] border border-x-[#9328d8] border-y-[#fb48f0]" />
        <div className="absolute top-[304px] left-[1112px] h-[1377px] w-px bg-[#00ffff]" />
        <div className="absolute top-[304px] left-[1264px] h-[1377px] w-px bg-[#00ffff]" />
        <div className="absolute top-[470px] left-[581px] h-px w-[1063px] bg-[#00ffff]" />
        <div className="absolute top-[503px] left-[581px] h-px w-[1063px] bg-[#00ffff]" />

        <svg className="absolute top-[357px] left-[1012px]" width="28" height="12" viewBox="0 0 28 12" fill="none">
          <path d="M12 1H6Q1 1 1 6T6 11H12M16 1H22Q27 1 27 6T22 11H16" stroke="#4f74bb" strokeWidth="2" />
          <path d="M8 4H20V8H8Z" fill="#4f74bb" />
        </svg>
      </div>
    </div>
  );
}

function VScroll() {
  return (
    <div className="flex w-[30px] shrink-0 flex-col border-x-2 border-[#222] bg-[#353535]">
      <div className="flex h-[34px] items-center justify-center bg-[#3a3a3a]">
        <svg width="18" height="14" viewBox="0 0 18 14"><path d="M9 1L17 13H1Z" fill="#dcdcdc" /></svg>
      </div>
      <div className="h-[144px] border-b-2 border-[#222]" />
      <div className="h-[1168px] bg-[#8e8e8e]" />
      <div className="flex-1 border-t-2 border-[#222]" />
      <div className="flex h-[34px] items-center justify-center pb-[1px]">
        <svg width="18" height="14" viewBox="0 0 18 14"><path d="M9 13L17 1H1Z" fill="#dcdcdc" /></svg>
      </div>
    </div>
  );
}

function StatusBar() {
  return (
    <footer className="flex h-[32px] shrink-0 items-center border-b-2 border-[#232323] bg-[#4a4a4a] text-[20.5px] leading-none text-[#dedede]">
      <Ico w={14} h={20} className="ml-[24px]"><path d="M1 1V19" stroke="#8d8d8d" strokeWidth="1.500" /><path d="M14 1V19L4 10Z" fill="#8d8d8d" /></Ico>
      <Ico w={11} h={20} className="ml-[28px]"><path d="M11 1V19L0 10Z" fill="#8d8d8d" /></Ico>
      <span className="ml-[38px] w-[12px]">1</span>
      <div className="ml-[130px]"><Down s={14} /></div>
      <Ico w={11} h={20} className="ml-[39px]"><path d="M0 1V19L11 10Z" fill="#8d8d8d" /></Ico>
      <Ico w={14} h={20} className="ml-[28px]"><path d="M13 1V19" stroke="#8d8d8d" strokeWidth="1.500" /><path d="M0 1V19L10 10Z" fill="#8d8d8d" /></Ico>
      <Ico w={36} h={28} className="ml-[35px]">
        <circle cx="13" cy="14" r="13" fill="#c4c4c4" />
        <path d="M5 5H14L20 12V22H5Z" fill="#bdbdbd" stroke="#2a2a2a" strokeWidth="2" />
        <path d="M13 5V13H20" stroke="#2a2a2a" strokeWidth="2" />
        <path d="M27 22H34L30.500 26Z" fill="#dcdcdc" />
      </Ico>
      <span className="ml-[28px] w-[162px] whitespace-nowrap">[Basic] (working)</span>
      <div className="ml-[43px]"><Down s={14} /></div>
      <div className="ml-[32px] size-[22px] rounded-full border-t-2 border-[#2d3a22] bg-gradient-to-b from-[#74b93d] to-[#58a02c]" />
      <span className="ml-[11px] w-[92px] whitespace-nowrap">No errors</span>
      <div className="ml-[36px]"><Down s={10} /></div>
      <div className="ml-[16px] flex h-full w-[926px] items-center border-2 border-b-0 border-[#222] bg-[#353535]">
        <svg width="11" height="18" viewBox="0 0 11 18" className="ml-[8px]"><path d="M11 0V18L0 9Z" fill="#dcdcdc" /></svg>
        <div className="ml-[351px] h-full w-[363px] bg-[#8e8e8e]" />
        <svg width="11" height="18" viewBox="0 0 11 18" className="ml-[168px]"><path d="M0 0V18L11 9Z" fill="#dcdcdc" /></svg>
      </div>
      <Ico w={30} h={22} className="ml-[10px]"><path d="M1 1H29V21H1ZM15 1V21" stroke="#cfcfcf" strokeWidth="2" fill="#2c2c2c" /></Ico>
      <Ico w={20} h={20} className="ml-[11px]"><path d="M1 19H19M5 15H19M9 11H19M13 7H19M17 3H19" stroke="#999" strokeWidth="2" strokeDasharray="2 2" /></Ico>
    </footer>
  );
}

/* ---------- right dock ---------- */

const DockRow = ({ label, children }: { label: string } & Kids) => (
  <div className="flex h-[56px] items-center pl-[19px]">
    <svg width="40" height="40" viewBox="0 0 40 40" fill="none">{children}</svg>
    <span className="ml-[14.500px] text-[22.5px] leading-none font-semibold text-[#dedede]">{label}</span>
  </div>
);

function Dock() {
  return (
    <aside className="flex flex-1 flex-col border-l-[5px] border-[#2a2a2a] bg-[#484848]">
      <div className="flex h-[24px] items-center justify-end border-b-2 border-[#222] bg-gradient-to-b from-[#353535] to-[#292929] pr-[6px]">
        <Ico w={16} h={12}><path d="M7 1L2 6L7 11M14 1L9 6L14 11" stroke="#cfcfcf" strokeWidth="1.500" /></Ico>
      </div>
      <div className="border-t-2 border-[#5e5e5e] border-b-[#222]">
        <div className="flex h-[18px] justify-center pt-[3px]"><Grip /></div>
        <DockRow label="Pages">
          <path d="M9 6H18V34H3V12H9ZM22 6H31V12H37V34H22Z" fill="#c6c6c6" />
          <path d="M3 10L7 6V10ZM37 10L33 6V10Z" fill="#c6c6c6" />
          <path d="M20 2V37" stroke="#e6e6e6" strokeWidth="2" />
        </DockRow>
        <DockRow label="Layers">
          <path d="M20 2L37 14L20 26L3 14Z" fill="#c6c6c6" />
          <path d="M4 23L7 21L20 30L33 21L37 24L20 36L3 24Z" fill="#c6c6c6" />
        </DockRow>
        <DockRow label="Links">
          <path d="M17 14V11Q10 9 7 12Q5 14 5 19.500T7 27Q10 30 17 28V25M23 14V11Q30 9 33 12Q35 14 35 19.500T33 27Q30 30 23 28V25" stroke="#c6c6c6" strokeWidth="4" />
          <path d="M12 19.500H28" stroke="#d0d0d0" strokeWidth="4" />
        </DockRow>
        <div className="h-[4px]" />
      </div>
      <div className="border-t-2 border-[#222]">
        <div className="flex h-[20px] justify-center border-t-2 border-[#5a5a5a] pt-[4px]"><Grip /></div>
        <DockRow label="Stroke">
          <path d="M3 7H37V10H3ZM3 16H37V21H3ZM3 26H37V32H3Z" fill="#c6c6c6" />
          <path d="M3 5.500H37M3 14.500H37M3 24.500H37" stroke="#222" strokeWidth="2" />
        </DockRow>
        <DockRow label="Color">
          <path d="M18 4C30 2 39 9 39 19S31 35 20 35S1 28 1 20C1 14 5 11 9 12C13 14 16 12 16 9Z" fill="#c6c6c6" />
          <g fill="#3f3f3f"><circle cx="9" cy="21" r="4" /><circle cx="17" cy="27" r="3.500" /><circle cx="27" cy="26" r="3.500" /><circle cx="33" cy="19" r="3" /><circle cx="29" cy="12" r="2.500" /></g>
        </DockRow>
        <div className="h-[3px]" />
      </div>
      <div className="h-[2px] bg-[#222]" />
    </aside>
  );
}

export default function App() {
  return (
    <div className="flex h-[1774px] w-[2314px] flex-col overflow-hidden bg-[#2a2a2a] font-['Noto_Sans','Open_Sans',sans-serif]">
      <AppBar />
      <ControlBar />
      <div className="flex flex-1">
        <Toolbar />
        <main className="ml-[4px] flex w-[1901px] shrink-0 flex-col">
          <div className="flex h-[56px] shrink-0 border-t-2 border-[#484848] bg-gradient-to-b from-[#343434] to-[#2c2c2c]">
            <div className="flex h-full w-[484px] items-center border-r-2 border-[#222] bg-[#4a4a4a] pl-[29px]">
              <Ico w={14} h={14}><path d="M2 2L12 12M12 2L2 12" stroke="#cfcfcf" strokeWidth="2.200" /></Ico>
              <span className="ml-[19px] text-[21px] leading-none font-semibold whitespace-nowrap text-[#dedede]">*resume_v6.indd @ 42% [GPU Preview]</span>
            </div>
          </div>
          <div className="flex h-[1498px] shrink-0">
            <div className="flex flex-col">
              <TopRuler />
              <div className="flex">
                <SideRuler />
                <Canvas />
              </div>
            </div>
            <VScroll />
          </div>
          <StatusBar />
        </main>
        <Dock />
      </div>
    </div>
  );
}
